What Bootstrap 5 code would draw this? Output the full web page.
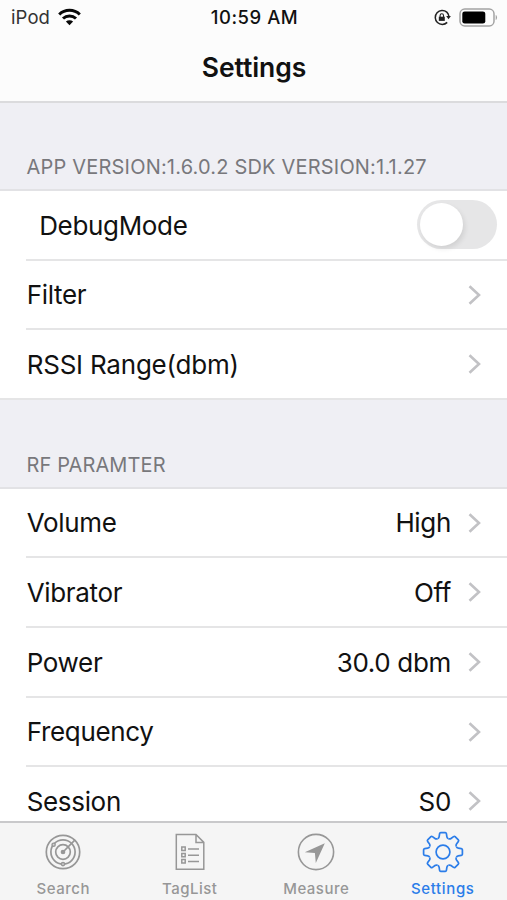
<!DOCTYPE html>
<html lang="en">
<head>
<meta charset="utf-8">
<meta name="viewport" content="width=device-width, initial-scale=1">
<title>Settings</title>
<link href="https://cdn.jsdelivr.net/npm/bootstrap@5.3.0/dist/css/bootstrap.min.css" rel="stylesheet">
<style>
  body { font-family: Inter, "Liberation Sans", sans-serif; color: #111; background: #fff; }
  svg { display: block; flex: none; }
  .screen { height: 900px; }
  .topbar { height: 103px; background: #fcfcfc; border-bottom: 2px solid #dbdbdd; }
  .status { height: 34px; font-size: 18.5px; line-height: 32px; padding: 0 9px 0 11px; }
  .status > div { flex: 1 1 0; }
  .carrier { color: #333; letter-spacing: .1px; }
  .clock { font-weight: 500; letter-spacing: .55px; color: #111; }
  .page-title { font-size: 26.5px; line-height: 67px; font-weight: 600; letter-spacing: -.1px; padding-left: 1px; }
  .settings { background: #efeff4; }
  .group-title { font-size: 20px; line-height: 24px; color: #78787c; padding: 0 0 10px 26.6px; border-bottom: 2px solid #e2e2e5; }
  .group-a { height: 88px; letter-spacing: .19px; }
  .group-b { height: 89px; letter-spacing: .1px; }
  .setting { height: 69.6px; padding-left: 26px; background: #fff; font-size: 26px; line-height: 67px; letter-spacing: -.33px; }
  .setting > div { height: 100%; padding: .6px 26px 0 .7px; border-bottom: 2px solid #e5e5e6; }
  .setting.last-row { padding-left: 0; letter-spacing: -.22px; }
  .setting.last-row > div { padding-left: 26.7px; }
  .setting svg { margin-left: 17px; }
  .setting.debug > div { padding: 0 10px 0 13.2px; }
  .debug-label { padding-top: 2px; }
  .toggle { width: 80px; height: 49px; border-radius: 25px; background: #e6e6e7; padding: 3px; }
  .knob { width: 43px; height: 43px; border-radius: 50%; background: #fff; box-shadow: 2px 3px 5px rgba(0,0,0,.09); }
  .tabs { height: 79px; background: #f5f5f5; border-top: 2px solid #c9c9cb; color: #979797; font-size: 15px; line-height: 18px; font-weight: 500; letter-spacing: .5px; padding-right: 1px; }
  .tabs a { flex: 1 1 0; color: inherit; padding-top: 8px; }
  .tabs a.current { color: #2b7de9; letter-spacing: .65px; }
  .tabs svg { margin-bottom: 7px; }
</style>
</head>
<body>
<div class="screen d-flex flex-column overflow-hidden">
  <header class="topbar flex-shrink-0">
    <div class="status d-flex align-items-center">
      <div class="d-flex align-items-center">
        <span class="carrier">iPod</span>
        <svg class="ms-2" width="23" height="18" viewBox="0 0 23 18" fill="none" stroke="#080808" stroke-width="3">
          <path d="M1.2 6.5a14.8 14.8 0 0 1 20.6 0M5 10.5a9.4 9.4 0 0 1 13 0"/>
          <path d="M7.9 13.6a5.2 5.2 0 0 1 7.2 0L11.5 17.2z" fill="#080808" stroke="none"/>
        </svg>
      </div>
      <div class="clock text-center text-nowrap">10:59 AM</div>
      <div class="d-flex align-items-center justify-content-end">
        <svg width="17" height="17" viewBox="0 0 17 17" fill="none" stroke="#222" stroke-width="1.5">
          <path d="M12.8 3.1A7 7 0 1 0 13.2 13.4M12.8 3.1Q14.4 4.6 14.8 7"/>
          <path d="M12.2 7.1h4.7l-2.4 3.1z" fill="#222" stroke="none"/>
          <path d="M4.8 7.7h6v4.2h-6z" fill="#222" stroke="none"/>
          <path d="M6.1 8V6.5a1.7 1.7 0 0 1 3.4 0V8" stroke-width="1.1"/>
        </svg>
        <svg class="ms-2" width="39" height="19" viewBox="0 0 39 19">
          <rect x="1" y="1" width="34" height="17" rx="4.8" fill="none" stroke="#a3a3a3" stroke-width="1.5"/>
          <rect x="3.3" y="3.4" width="23" height="12.2" rx="2.4" fill="#000"/>
          <path d="M36.7 7c1.8.5 1.8 4.5 0 5z" fill="#a3a3a3"/>
        </svg>
      </div>
    </div>
    <h1 class="page-title text-center m-0">Settings</h1>
  </header>

  <main class="settings flex-grow-1 overflow-hidden">
    <h2 class="group-title group-a fw-normal m-0 d-flex align-items-end">APP VERSION:1.6.0.2 SDK VERSION:1.1.27</h2>
    <div class="setting debug"><div class="d-flex align-items-center justify-content-between"><span class="debug-label">DebugMode</span><span class="toggle"><span class="knob d-block"></span></span></div></div>
    <div class="setting"><div class="d-flex align-items-center"><span class="me-auto">Filter</span><svg width="13" height="20" viewBox="0 0 13 20" fill="none" stroke="#c2c2c5" stroke-width="2.6"><path d="M1.5 1.2 11 10 1.5 18.8"/></svg></div></div>
    <div class="setting last-row"><div class="d-flex align-items-center"><span class="me-auto">RSSI Range(dbm)</span><svg width="13" height="20" viewBox="0 0 13 20" fill="none" stroke="#c2c2c5" stroke-width="2.6"><path d="M1.5 1.2 11 10 1.5 18.8"/></svg></div></div>

    <h2 class="group-title group-b fw-normal m-0 d-flex align-items-end">RF PARAMTER</h2>
    <div class="setting"><div class="d-flex align-items-center"><span class="me-auto">Volume</span><span>High</span><svg width="13" height="20" viewBox="0 0 13 20" fill="none" stroke="#c2c2c5" stroke-width="2.6"><path d="M1.5 1.2 11 10 1.5 18.8"/></svg></div></div>
    <div class="setting"><div class="d-flex align-items-center"><span class="me-auto">Vibrator</span><span>Off</span><svg width="13" height="20" viewBox="0 0 13 20" fill="none" stroke="#c2c2c5" stroke-width="2.6"><path d="M1.5 1.2 11 10 1.5 18.8"/></svg></div></div>
    <div class="setting"><div class="d-flex align-items-center"><span class="me-auto">Power</span><span>30.0 dbm</span><svg width="13" height="20" viewBox="0 0 13 20" fill="none" stroke="#c2c2c5" stroke-width="2.6"><path d="M1.5 1.2 11 10 1.5 18.8"/></svg></div></div>
    <div class="setting"><div class="d-flex align-items-center"><span class="me-auto">Frequency</span><svg width="13" height="20" viewBox="0 0 13 20" fill="none" stroke="#c2c2c5" stroke-width="2.6"><path d="M1.5 1.2 11 10 1.5 18.8"/></svg></div></div>
    <div class="setting"><div class="d-flex align-items-center"><span class="me-auto">Session</span><span>S0</span><svg width="13" height="20" viewBox="0 0 13 20" fill="none" stroke="#c2c2c5" stroke-width="2.6"><path d="M1.5 1.2 11 10 1.5 18.8"/></svg></div></div>
  </main>

  <nav class="tabs d-flex flex-shrink-0">
    <a class="d-flex flex-column align-items-center text-decoration-none" href="#">
      <svg width="42" height="42" viewBox="-21 -21 42 42" fill="none" stroke="currentColor" stroke-width="1.7">
        <circle r="16.7"/><circle r="12.1"/>
        <circle r="7.3"/><circle r="1.5" fill="currentColor"/><path d="M0 0 11.8-11.8"/>
        <circle cx="-9.4" cy="-7.3" r="1.6" fill="#d5d5d5" stroke-width="1.4"/><circle cx="0" cy="12.1" r="1.6" fill="#d5d5d5" stroke-width="1.4"/>
      </svg>
      <span>Search</span>
    </a>
    <a class="d-flex flex-column align-items-center text-decoration-none" href="#">
      <svg width="42" height="42" viewBox="-21 -21 42 42" fill="none" stroke="currentColor" stroke-width="1.5">
        <path d="M-13.7-17.5H6L13.8-9.6V17.2H-13.7zM6-17.5V-9.6H13.8"/>
        <path d="M-8.2-5h3.4v3.4h-3.4zM-8.2 1.4h3.4v3.4h-3.4zM-8.2 7.6h3.4V11h-3.4zM-2-3H9M-2 3.2H9M-2 9.6H9"/>
      </svg>
      <span>TagList</span>
    </a>
    <a class="d-flex flex-column align-items-center text-decoration-none" href="#">
      <svg width="42" height="42" viewBox="-21 -21 42 42" fill="none" stroke="currentColor" stroke-width="1.6">
        <circle r="17.6"/><path d="M8.8-8.8-11.2.3-1.1 1-.2 11z" fill="currentColor" stroke="none"/>
      </svg>
      <span>Measure</span>
    </a>
    <a class="current d-flex flex-column align-items-center text-decoration-none" href="#" aria-current="page">
      <svg width="42" height="42" viewBox="-21 -21 42 42" fill="none" stroke="currentColor" stroke-width="1.7">
        <defs><path id="tooth" d="M-5.5-13.3Q-4.1-13.8-3.9-15.2L-3.4-18.3Q-3.2-19.4-2.3-19.4H2.3Q3.2-19.4 3.4-18.3L3.9-15.2Q4.1-13.8 5.5-13.3"/></defs>
        <use href="#tooth"/><use href="#tooth" transform="rotate(45)"/><use href="#tooth" transform="rotate(90)"/><use href="#tooth" transform="rotate(135)"/>
        <use href="#tooth" transform="rotate(180)"/><use href="#tooth" transform="rotate(225)"/><use href="#tooth" transform="rotate(270)"/><use href="#tooth" transform="rotate(315)"/>
        <circle r="6.9"/>
      </svg>
      <span>Settings</span>
    </a>
  </nav>
</div>
<script src="https://cdn.jsdelivr.net/npm/bootstrap@5.3.0/dist/js/bootstrap.bundle.min.js"></script>
</body>
</html>
